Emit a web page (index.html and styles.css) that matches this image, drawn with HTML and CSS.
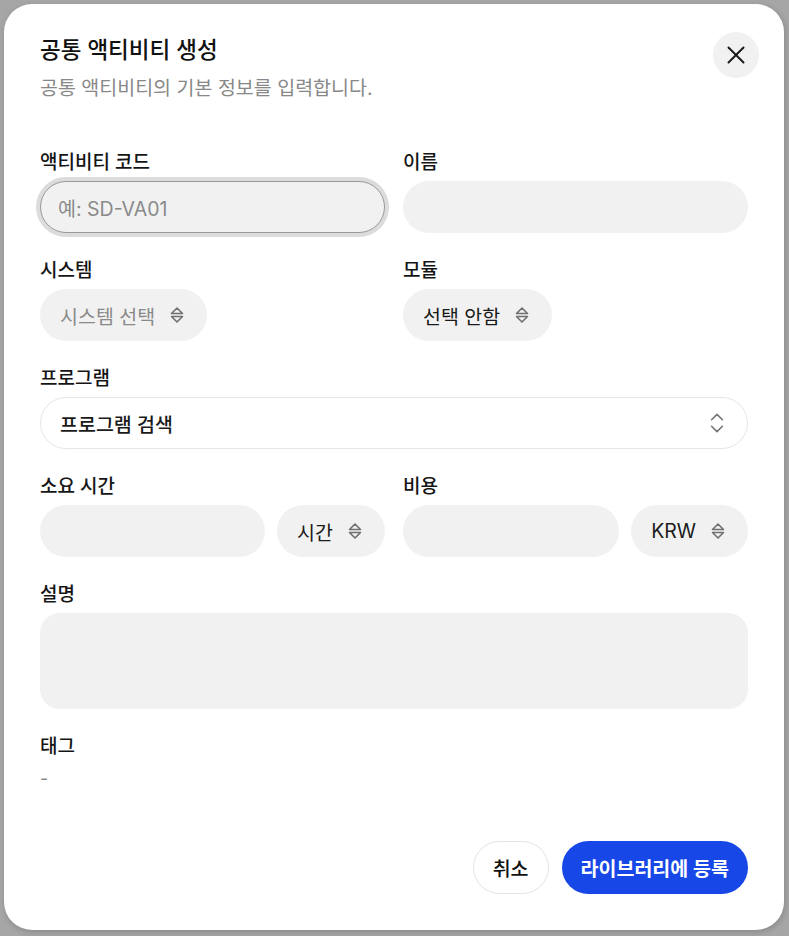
FILE: index.html
```html
<!DOCTYPE html>
<html lang="ko">
<head>
<meta charset="utf-8">
<title>공통 액티비티 생성</title>
<link rel="stylesheet" href="styles.css">
</head>
<body>
<div class="dialog">
  <div class="header">
    <div class="heading">
      <h1 class="title">공통 액티비티 생성</h1>
      <p class="subtitle">공통 액티비티의 기본 정보를 입력합니다.</p>
    </div>
    <button class="close" aria-label="닫기">
      <svg width="30" height="30" viewBox="0 0 24 24" fill="none" stroke="#1a1a1a" stroke-width="1.6" stroke-linecap="round"><path d="M18 6 6 18"/><path d="m6 6 12 12"/></svg>
    </button>
  </div>

  <div class="form">
    <div class="field">
      <label class="label">액티비티 코드</label>
      <div class="input focused"><span class="placeholder">예: SD-VA01</span></div>
    </div>
    <div class="field">
      <label class="label">이름</label>
      <div class="input"></div>
    </div>

    <div class="field">
      <label class="label">시스템</label>
      <div class="row"><div class="select"><span class="placeholder">시스템 선택</span>
        <svg class="updown" width="20" height="20" viewBox="0 0 20 20" fill="none" stroke="#707070" stroke-width="1.6" stroke-linejoin="round"><path d="M10 3 15.5 8.5H4.5Z"/><path d="M4.5 11.5H15.5L10 17Z"/></svg>
      </div></div>
    </div>
    <div class="field">
      <label class="label">모듈</label>
      <div class="row"><div class="select"><span class="value">선택 안함</span>
        <svg class="updown" width="20" height="20" viewBox="0 0 20 20" fill="none" stroke="#707070" stroke-width="1.6" stroke-linejoin="round"><path d="M10 3 15.5 8.5H4.5Z"/><path d="M4.5 11.5H15.5L10 17Z"/></svg>
      </div></div>
    </div>

    <div class="field span2">
      <label class="label">프로그램</label>
      <div class="combo"><span class="value">프로그램 검색</span>
        <svg width="26" height="26" viewBox="0 0 24 24" fill="none" stroke="#777" stroke-width="1.5" stroke-linecap="round" stroke-linejoin="round"><path d="m7 15 5 5 5-5"/><path d="m7 9 5-5 5 5"/></svg>
      </div>
    </div>

    <div class="field">
      <label class="label">소요 시간</label>
      <div class="row">
        <div class="input grow"></div>
        <div class="select"><span class="value">시간</span>
          <svg class="updown" width="20" height="20" viewBox="0 0 20 20" fill="none" stroke="#707070" stroke-width="1.6" stroke-linejoin="round"><path d="M10 3 15.5 8.5H4.5Z"/><path d="M4.5 11.5H15.5L10 17Z"/></svg>
        </div>
      </div>
    </div>
    <div class="field">
      <label class="label">비용</label>
      <div class="row">
        <div class="input grow"></div>
        <div class="select"><span class="value">KRW</span>
          <svg class="updown" width="20" height="20" viewBox="0 0 20 20" fill="none" stroke="#707070" stroke-width="1.6" stroke-linejoin="round"><path d="M10 3 15.5 8.5H4.5Z"/><path d="M4.5 11.5H15.5L10 17Z"/></svg>
        </div>
      </div>
    </div>

    <div class="field span2">
      <label class="label">설명</label>
      <div class="textarea"></div>
    </div>

    <div class="field span2">
      <label class="label">태그</label>
      <div class="empty">-</div>
    </div>
  </div>

  <div class="footer">
    <button class="btn secondary">취소</button>
    <button class="btn primary">라이브러리에 등록</button>
  </div>
</div>
</body>
</html>
```
FILE: styles.css
```css
* { box-sizing: border-box; }

html, body {
  margin: 0;
  padding: 0;
  background: #a6a6a6;
}

body {
  font-family: Inter, "Noto Sans CJK KR", "Noto Sans", sans-serif;
  color: #111;
  padding: 4px 5px 6px 4px;
}

.dialog {
  background: #fff;
  border-radius: 28px;
  padding: 32px 36px 36px 36px;
  box-shadow: 1px 2px 6px rgba(0, 0, 0, 0.18);
}

.header {
  display: flex;
  justify-content: space-between;
  align-items: flex-start;
}

.title {
  margin: 0;
  font-size: 22.5px;
  line-height: 28px;
  font-weight: 500;
  color: #111;
}

.subtitle {
  margin: 12px 0 0;
  font-size: 19.5px;
  line-height: 24px;
  color: #888;
  font-weight: 400;
}

.close {
  width: 46px;
  height: 46px;
  border-radius: 50%;
  border: none;
  background: #f1f1f1;
  display: flex;
  align-items: center;
  justify-content: center;
  margin: -4px -11px 0 0;
  padding: 0;
}

.form {
  margin-top: 48px;
  display: grid;
  grid-template-columns: 1fr 1fr;
  column-gap: 18px;
  row-gap: 23px;
}

.span2 { grid-column: span 2; }

.field {
  display: flex;
  flex-direction: column;
  gap: 6px;
}

.label {
  font-size: 19px;
  line-height: 24px;
  padding-top: 3px;
  font-weight: 500;
  color: #151515;
}

.row {
  display: flex;
  gap: 12px;
}

.input {
  height: 52px;
  border-radius: 26px;
  background: #f1f1f1;
  display: flex;
  align-items: center;
  padding: 0 18px;
  font-size: 19.5px;
}

.input.grow { flex: 1; }

.input.focused {
  border: 1px solid #9a9a9a;
  box-shadow: 0 0 0 4px #dcdcdc;
  padding-left: 17px;
}

.placeholder {
  color: #8a8a8a;
  font-size: 19.5px;
}

.value {
  color: #1a1a1a;
  font-size: 19.5px;
}

.select {
  height: 52px;
  border-radius: 26px;
  background: #f1f1f1;
  display: flex;
  align-items: center;
  gap: 12px;
  padding: 0 20px 0 20px;
  flex: none;
}

.combo {
  height: 52px;
  border-radius: 26px;
  background: #fff;
  border: 1px solid #e6e6e6;
  display: flex;
  align-items: center;
  justify-content: space-between;
  padding: 0 17px 0 19px;
}

.combo .value { font-weight: 500; }

.textarea {
  height: 96px;
  border-radius: 20px;
  background: #f1f1f1;
}

.empty {
  font-size: 18px;
  line-height: 24px;
  padding-top: 2px;
  color: #888;
}

.footer {
  margin-top: 50px;
  display: flex;
  justify-content: flex-end;
  gap: 13px;
}

.btn {
  height: 53px;
  border-radius: 27px;
  font-family: Inter, "Noto Sans CJK KR", sans-serif;
  font-size: 19.5px;
  padding: 0 19px;
}

.btn.secondary {
  background: #fff;
  border: 1px solid #e3e3e3;
  color: #111;
  font-weight: 500;
}

.btn.primary {
  background: #1747e6;
  border: none;
  color: #fff;
  font-weight: 600;
}
```
